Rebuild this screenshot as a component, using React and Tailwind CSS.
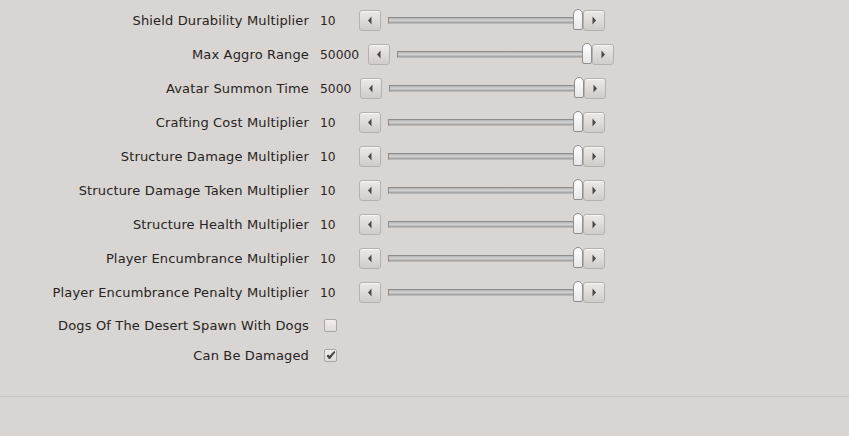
import React from "react";

const sliders = [
  ["Shield Durability Multiplier", "10"],
  ["Max Aggro Range", "50000"],
  ["Avatar Summon Time", "5000"],
  ["Crafting Cost Multiplier", "10"],
  ["Structure Damage Multiplier", "10"],
  ["Structure Damage Taken Multiplier", "10"],
  ["Structure Health Multiplier", "10"],
  ["Player Encumbrance Multiplier", "10"],
  ["Player Encumbrance Penalty Multiplier", "10"],
];

function ArrowBtn({ dir }) {
  return (
    <div className="w-[22px] h-[21px] rounded-[3px] border border-[#b5b1ae] bg-gradient-to-b from-[#ece9e7] to-[#d0ccc9] shadow-[inset_0_1px_0_#f8f6f4] flex items-center justify-center shrink-0">
      <svg width="6" height="9" viewBox="0 0 6 9">
        {dir === "left" ? (
          <path d="M4.5 0.5 L1 4.5 L4.5 8.5 Z" fill="#4a4a4a" />
        ) : (
          <path d="M1.5 0.5 L5 4.5 L1.5 8.5 Z" fill="#4a4a4a" />
        )}
      </svg>
    </div>
  );
}

function Slider() {
  return (
    <div className="flex items-center">
      <ArrowBtn dir="left" />
      <div className="relative ml-[7px] w-[195px] h-[21px] flex items-center">
        <div className="w-full h-[7px] border border-[#8c8c8c] border-b-[#b8b8b8] bg-gradient-to-b from-[#b5b5b5] via-[#d2d2d2] to-[#9c9c9c]" />
        <div className="absolute right-0 top-[-1px] w-[10px] h-[21px] rounded-t-[5px] rounded-b-[2px] border border-[#8e8e8e] bg-gradient-to-b from-[#ffffff] to-[#e6e6e6] z-10" />
      </div>
      <ArrowBtn dir="right" />
    </div>
  );
}

function Checkbox({ checked }) {
  return (
    <div className="w-[13px] h-[13px] rounded-[2px] border border-[#a9a6a3] bg-gradient-to-b from-[#f0eeec] to-[#dedad7] flex items-center justify-center">
      {checked && (
        <svg width="10" height="9" viewBox="0 0 10 9">
          <path d="M1 5 L3.5 8 L9 1 L8 0.5 L3.5 5.5 L2.2 3.8 Z" fill="#3a3a3a" stroke="#3a3a3a" strokeWidth="0.8" strokeLinejoin="round" />
        </svg>
      )}
    </div>
  );
}

export default function App() {
  return (
    <div
      className="w-[849px] h-[436px] bg-[#d9d5d2] text-[#262422] text-[13px] overflow-hidden"
      style={{ fontFamily: '"DejaVu Sans", Verdana, sans-serif' }}
    >
      <div className="pt-[3px] h-[397px] border-b border-[#c6c4c3]">
        {sliders.map(([label, value]) => (
          <div key={label} className="flex items-center h-[34px]">
            <div className="w-[309px] text-right whitespace-nowrap tracking-[0.15px] pt-[2px]">{label}</div>
            <div className="ml-[11px] min-w-[30px] text-[12.3px] pt-[2px]">{value}</div>
            <div className="ml-[9px]">
              <Slider />
            </div>
          </div>
        ))}
        <div className="flex items-center h-[30px] mt-[1px]">
          <div className="w-[309px] text-right whitespace-nowrap tracking-[0.15px] pt-[2px]">Dogs Of The Desert Spawn With Dogs</div>
          <div className="ml-[15px]">
            <Checkbox checked={false} />
          </div>
        </div>
        <div className="flex items-center h-[30px]">
          <div className="w-[309px] text-right whitespace-nowrap tracking-[0.15px] pt-[2px]">Can Be Damaged</div>
          <div className="ml-[15px]">
            <Checkbox checked={true} />
          </div>
        </div>
      </div>
    </div>
  );
}
